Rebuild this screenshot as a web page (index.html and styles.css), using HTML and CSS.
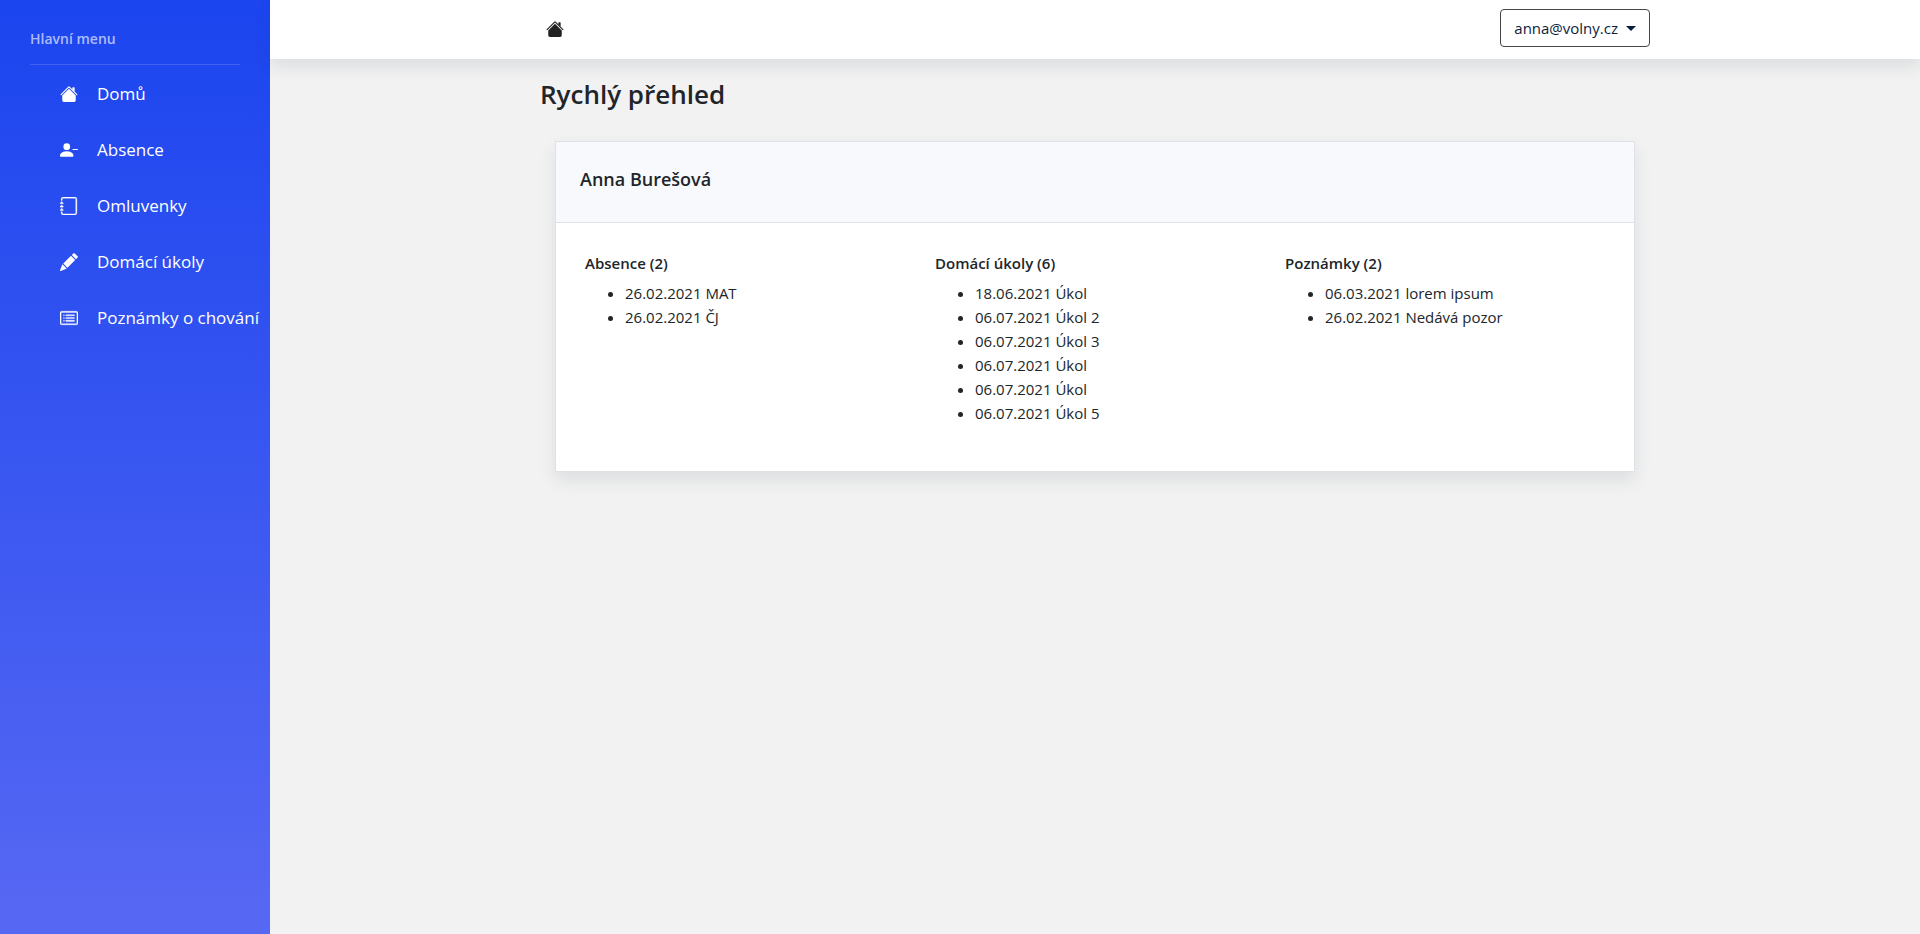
FILE: index.html
```html
<!DOCTYPE html>
<html lang="cs">
<head>
<meta charset="utf-8">
<title>Rychlý přehled</title>
<meta name="viewport" content="width=device-width, initial-scale=1">
<link rel="stylesheet" href="styles.css">
</head>
<body>
<svg class="sprite" aria-hidden="true">
  <symbol id="house" viewBox="0 0 16 16"><path d="M8 3.293l6 6V13.5a1.5 1.5 0 0 1-1.5 1.5h-9A1.5 1.5 0 0 1 2 13.5V9.293l6-6zm5-.793V6l-2-2V2.5a.5.5 0 0 1 .5-.5h1a.5.5 0 0 1 .5.5z"/><path d="M7.293 1.5a1 1 0 0 1 1.414 0l6.647 6.646a.5.5 0 0 1-.708.708L8 2.207 1.354 8.854a.5.5 0 1 1-.708-.708L7.293 1.5z"/></symbol>
  <symbol id="person" viewBox="0 0 16 16"><path d="M11 7.5a.5.5 0 0 1 .5-.5h4a.5.5 0 0 1 0 1h-4a.5.5 0 0 1-.5-.5z"/><path d="M1 14s-1 0-1-1 1-4 6-4 6 3 6 4-1 1-1 1H1zm5-6a3 3 0 1 0 0-6 3 3 0 0 0 0 6z"/></symbol>
  <symbol id="journal" viewBox="0 0 16 16"><path d="M3 0h10a2 2 0 0 1 2 2v12a2 2 0 0 1-2 2H3a2 2 0 0 1-2-2v-1h1v1a1 1 0 0 0 1 1h10a1 1 0 0 0 1-1V2a1 1 0 0 0-1-1H3a1 1 0 0 0-1 1v1H1V2a2 2 0 0 1 2-2z"/><path d="M1 5v-.5a.5.5 0 0 1 1 0V5h.5a.5.5 0 0 1 0 1h-2a.5.5 0 0 1 0-1H1zm0 3v-.5a.5.5 0 0 1 1 0V8h.5a.5.5 0 0 1 0 1h-2a.5.5 0 0 1 0-1H1zm0 3v-.5a.5.5 0 0 1 1 0v.5h.5a.5.5 0 0 1 0 1h-2a.5.5 0 0 1 0-1H1z"/></symbol>
  <symbol id="pencil" viewBox="0 0 16 16"><path d="M12.854.146a.5.5 0 0 0-.707 0L10.5 1.793 14.207 5.5l1.647-1.646a.5.5 0 0 0 0-.708l-3-3zM13.5 6.207L9.793 2.5 2.900 9.400 6.600 13.100zM5.900 13.800L2.200 10.100a.5.5 0 0 0-.168.210l-2 5a.5.5 0 0 0 .65.65l5-2a.5.5 0 0 0 .218-.160z"/></symbol>
  <symbol id="list" viewBox="0 0 16 16"><path d="M14.5 3a.5.5 0 0 1 .5.5v9a.5.5 0 0 1-.5.5h-13a.5.5 0 0 1-.5-.5v-9a.5.5 0 0 1 .5-.5h13zm-13-1A1.5 1.5 0 0 0 0 3.5v9A1.5 1.5 0 0 0 1.5 14h13a1.5 1.5 0 0 0 1.500-1.500v-9A1.500 1.500 0 0 0 14.500 2h-13z"/><path d="M5 8a.5.5 0 0 1 .5-.5h7a.5.5 0 0 1 0 1h-7A.5.5 0 0 1 5 8zm0-2.500a.5.5 0 0 1 .5-.5h7a.5.5 0 0 1 0 1h-7a.5.5 0 0 1-.5-.5zm0 5a.5.5 0 0 1 .5-.5h7a.5.5 0 0 1 0 1h-7a.5.5 0 0 1-.5-.5zm-1-5a.5.5 0 1 1-1 0 .5.5 0 0 1 1 0zM4 8a.5.5 0 1 1-1 0 .5.5 0 0 1 1 0zm0 2.500a.5.5 0 1 1-1 0 .5.5 0 0 1 1 0z"/></symbol>
</svg>
<div class="app">
  <aside class="sidebar">
    <h2 class="sidebar-title">Hlavní menu</h2>
    <nav class="menu" aria-label="Hlavní menu">
      <a class="menu-link" href="#"><svg class="icon" aria-hidden="true"><use href="#house"/></svg>Domů</a>
      <a class="menu-link" href="#"><svg class="icon" aria-hidden="true"><use href="#person"/></svg>Absence</a>
      <a class="menu-link" href="#"><svg class="icon icon-outline" aria-hidden="true"><use href="#journal"/></svg>Omluvenky</a>
      <a class="menu-link" href="#"><svg class="icon" aria-hidden="true"><use href="#pencil"/></svg>Domácí úkoly</a>
      <a class="menu-link" href="#"><svg class="icon icon-outline" aria-hidden="true"><use href="#list"/></svg>Poznámky o chování</a>
    </nav>
  </aside>
  <div class="page">
    <header class="topbar">
      <div class="container topbar-inner">
        <a class="home" href="#" aria-label="Domů"><svg class="icon" aria-hidden="true"><use href="#house"/></svg></a>
        <button class="account" type="button">anna@volny.cz</button>
      </div>
    </header>
    <main class="container">
      <h1 class="title">Rychlý přehled</h1>
      <section class="card">
        <header class="card-header"><h2 class="student">Anna Burešová</h2></header>
        <div class="card-body">
          <section>
            <h3 class="group-title">Absence (2)</h3>
            <ul class="group-list">
              <li>26.02.2021 MAT</li>
              <li>26.02.2021 ČJ</li>
            </ul>
          </section>
          <section>
            <h3 class="group-title">Domácí úkoly (6)</h3>
            <ul class="group-list">
              <li>18.06.2021 Úkol</li>
              <li>06.07.2021 Úkol 2</li>
              <li>06.07.2021 Úkol 3</li>
              <li>06.07.2021 Úkol</li>
              <li>06.07.2021 Úkol</li>
              <li>06.07.2021 Úkol 5</li>
            </ul>
          </section>
          <section>
            <h3 class="group-title">Poznámky (2)</h3>
            <ul class="group-list">
              <li>06.03.2021 lorem ipsum</li>
              <li>26.02.2021 Nedává pozor</li>
            </ul>
          </section>
        </div>
      </section>
    </main>
  </div>
</div>
</body>
</html>
```
FILE: styles.css
```css
*, *::before, *::after { box-sizing: border-box; }

body {
  margin: 0;
  font-family: "Segoe UI", "Open Sans", "Noto Sans", sans-serif;
  font-size: 15px;
  line-height: 24px;
  color: #212529;
  background: #f2f2f2;
}

h1, h2, h3, ul { margin: 0; }

.sprite { display: none; }

.icon {
  flex: none;
  width: 18px;
  height: 18px;
  fill: currentColor;
}

.icon-outline {
  stroke: currentColor;
  stroke-width: 0.3;
}

.app {
  display: flex;
  min-height: 100vh;
}

.sidebar {
  flex: none;
  width: 270px;
  color: #fff;
  background: linear-gradient(180deg, #1b45ef, #5768f3);
}

.sidebar-title {
  margin: 0 30px;
  padding: 27px 0 13px;
  border-bottom: 1px solid rgba(255, 255, 255, 0.15);
  font-size: 14px;
  font-weight: 600;
  color: rgba(255, 255, 255, 0.65);
}

.menu-link {
  display: flex;
  align-items: center;
  gap: 19px;
  height: 56px;
  padding: 2px 0 0 60px;
  font-size: 17px;
  color: inherit;
  text-decoration: none;
  white-space: nowrap;
}

.page {
  flex: 1;
  min-width: 0;
}

.container {
  max-width: 1140px;
  margin: 0 auto;
  padding: 0 15px;
}

.topbar {
  padding: 9px 0 12px;
  background: #fff;
  box-shadow: 0 8px 16px rgba(33, 50, 65, 0.1);
}

.topbar-inner {
  display: flex;
  align-items: center;
  justify-content: space-between;
}

.home {
  display: flex;
  padding: 2px 0 0 6px;
  color: #212121;
}

.account {
  display: flex;
  align-items: center;
  gap: 8px;
  height: 38px;
  padding: 0 13px;
  border: 1px solid #454545;
  border-radius: 4px;
  background: #fff;
  color: #0b1d3c;
  font: inherit;
}

.account::after {
  content: "";
  border: 5px solid transparent;
  border-top-color: currentColor;
  border-bottom: 0;
}

.title {
  padding: 18px 0 30px;
  font-size: 26px;
  font-weight: 600;
  line-height: 34px;
}

.card {
  margin: 0 15px;
  border: 1px solid #dee2e6;
  background: #fff;
  box-shadow: 0 8px 16px rgba(33, 50, 65, 0.1);
}

.card-header {
  padding: 25px 24px 31px;
  border-bottom: 1px solid #dee2e6;
  background: #f8f9fc;
}

.student {
  font-size: 18px;
  font-weight: 600;
  line-height: 24px;
}

.card-body {
  display: grid;
  grid-template-columns: repeat(3, 1fr);
  gap: 30px;
  padding: 30px 29px;
}

.group-title {
  margin-bottom: 8px;
  font-size: 15px;
  font-weight: 600;
  line-height: 20px;
}

.group-list {
  padding: 0 0 16px 40px;
}
```
